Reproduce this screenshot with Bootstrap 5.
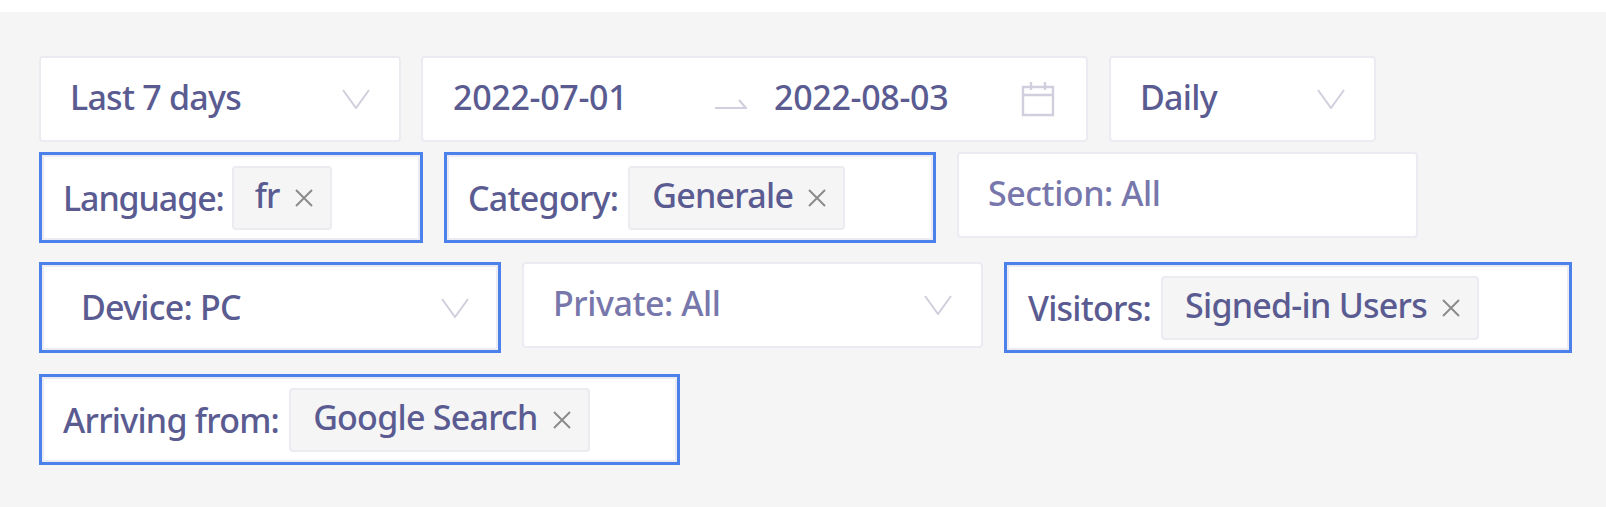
<!DOCTYPE html>
<html lang="en">
<head>
<meta charset="utf-8">
<title>Filters</title>
<link href="https://cdn.jsdelivr.net/npm/bootstrap@5.3.0/dist/css/bootstrap.min.css" rel="stylesheet">
<style>
html,body{height:100%;background:#fff}
body{font-family:"Noto Sans","Liberation Sans",sans-serif;color:#5a5b91;font-size:34px;font-weight:500;letter-spacing:-.75px;overflow:hidden}
.stage{margin-top:12px;height:495px;background:#f5f5f6;padding:44px 0 0 39px}
.frow{display:flex;align-items:flex-start;gap:21px}
.r1{margin-bottom:10px}.r2{margin-bottom:19px}.r3{margin-bottom:21px}
.fbox{display:flex;align-items:center;background:#fff;border:2px solid #ebebf1;border-radius:4px;height:86px;padding:0 29px 0 29px}
.fbox>span{margin-bottom:4px}
.fblue{border:3px solid #4c80ea;border-radius:0;height:91px;box-shadow:inset 0 0 0 2px #ebebf1}
.w1{width:362px;margin-right:-1px}.w2{width:667px}.w3{width:267px}.w4{width:384px}.w5{width:492px}.w6{width:461px}.w7{width:462px}.w8{width:568px}.w9{width:641px}
.fbox>.flabel{line-height:1;padding-top:1px;margin:0 0 0 -8px;white-space:nowrap}
.fbox>.lang{letter-spacing:-1.1px}
.fbox>.ftag{display:flex;align-items:center;height:64px;margin:0 0 0 10px;padding:0 16px 4px 22px;background:#f5f5f6;border:2px solid #ebebf0;border-radius:4px;white-space:nowrap}
.fbox>.ftagnar{margin-left:8px;padding-left:21px}
.ftag svg{margin:4px 0 0 14px;flex:none}
.soft{color:#7877ac;letter-spacing:-.45px}
.ico{flex:none;margin-left:auto}
.fbox>.dateval{width:176px;letter-spacing:-.3px;margin-left:1px}
.fbox>.date2{margin-left:0}
.darrow{margin:8px 27px 0 86px;flex:none}
.calico{margin-right:2px}
.fbox.pad-dev{padding-left:39px}
.fbox.pad-dev>span{margin-bottom:0}
</style>
</head>
<body>
<div class="stage">
  <div class="frow r1">
    <div class="fbox w1"><span>Last 7 days</span><svg class="ico" width="28" height="20" viewBox="0 0 28 20" fill="none" stroke="#cfcfdd" stroke-width="2"><path d="M1 1l13 18L27 1"/></svg></div>
    <div class="fbox w2"><span class="dateval">2022-07-01</span><svg class="darrow" width="32" height="12" viewBox="0 0 32 12" fill="none" stroke="#cfcfdd" stroke-width="2"><path d="M0 11h31L24 3"/></svg><span class="dateval date2">2022-08-03</span><svg class="ico calico" width="34" height="36" viewBox="0 0 34 36" fill="none" stroke="#cfcfdd" stroke-width="2.4"><path d="M2 6h30v28H2zM2 14h30M10 1v8M24 1v8"/></svg></div>
    <div class="fbox w3"><span>Daily</span><svg class="ico" width="28" height="20" viewBox="0 0 28 20" fill="none" stroke="#cfcfdd" stroke-width="2"><path d="M1 1l13 18L27 1"/></svg></div>
  </div>
  <div class="frow r2">
    <div class="fbox fblue w4"><span class="flabel lang">Language:</span><span class="ftag ftagnar">fr<svg width="20" height="20" viewBox="0 0 20 20" stroke="#8b8b8b" stroke-width="2"><path d="M2 2l16 16M18 2L2 18"/></svg></span></div>
    <div class="fbox fblue w5"><span class="flabel">Category:</span><span class="ftag">Generale<svg width="20" height="20" viewBox="0 0 20 20" stroke="#8b8b8b" stroke-width="2"><path d="M2 2l16 16M18 2L2 18"/></svg></span></div>
    <div class="fbox w6 soft"><span>Section: All</span></div>
  </div>
  <div class="frow r3">
    <div class="fbox fblue w7 pad-dev"><span>Device: PC</span><svg class="ico" width="28" height="20" viewBox="0 0 28 20" fill="none" stroke="#cfcfdd" stroke-width="2"><path d="M1 1l13 18L27 1"/></svg></div>
    <div class="fbox w6 soft"><span>Private: All</span><svg class="ico" width="28" height="20" viewBox="0 0 28 20" fill="none" stroke="#cfcfdd" stroke-width="2"><path d="M1 1l13 18L27 1"/></svg></div>
    <div class="fbox fblue w8"><span class="flabel">Visitors:</span><span class="ftag">Signed-in Users<svg width="20" height="20" viewBox="0 0 20 20" stroke="#8b8b8b" stroke-width="2"><path d="M2 2l16 16M18 2L2 18"/></svg></span></div>
  </div>
  <div class="frow">
    <div class="fbox fblue w9"><span class="flabel">Arriving from:</span><span class="ftag">Google Search<svg width="20" height="20" viewBox="0 0 20 20" stroke="#8b8b8b" stroke-width="2"><path d="M2 2l16 16M18 2L2 18"/></svg></span></div>
  </div>
</div>
</body>
</html>
